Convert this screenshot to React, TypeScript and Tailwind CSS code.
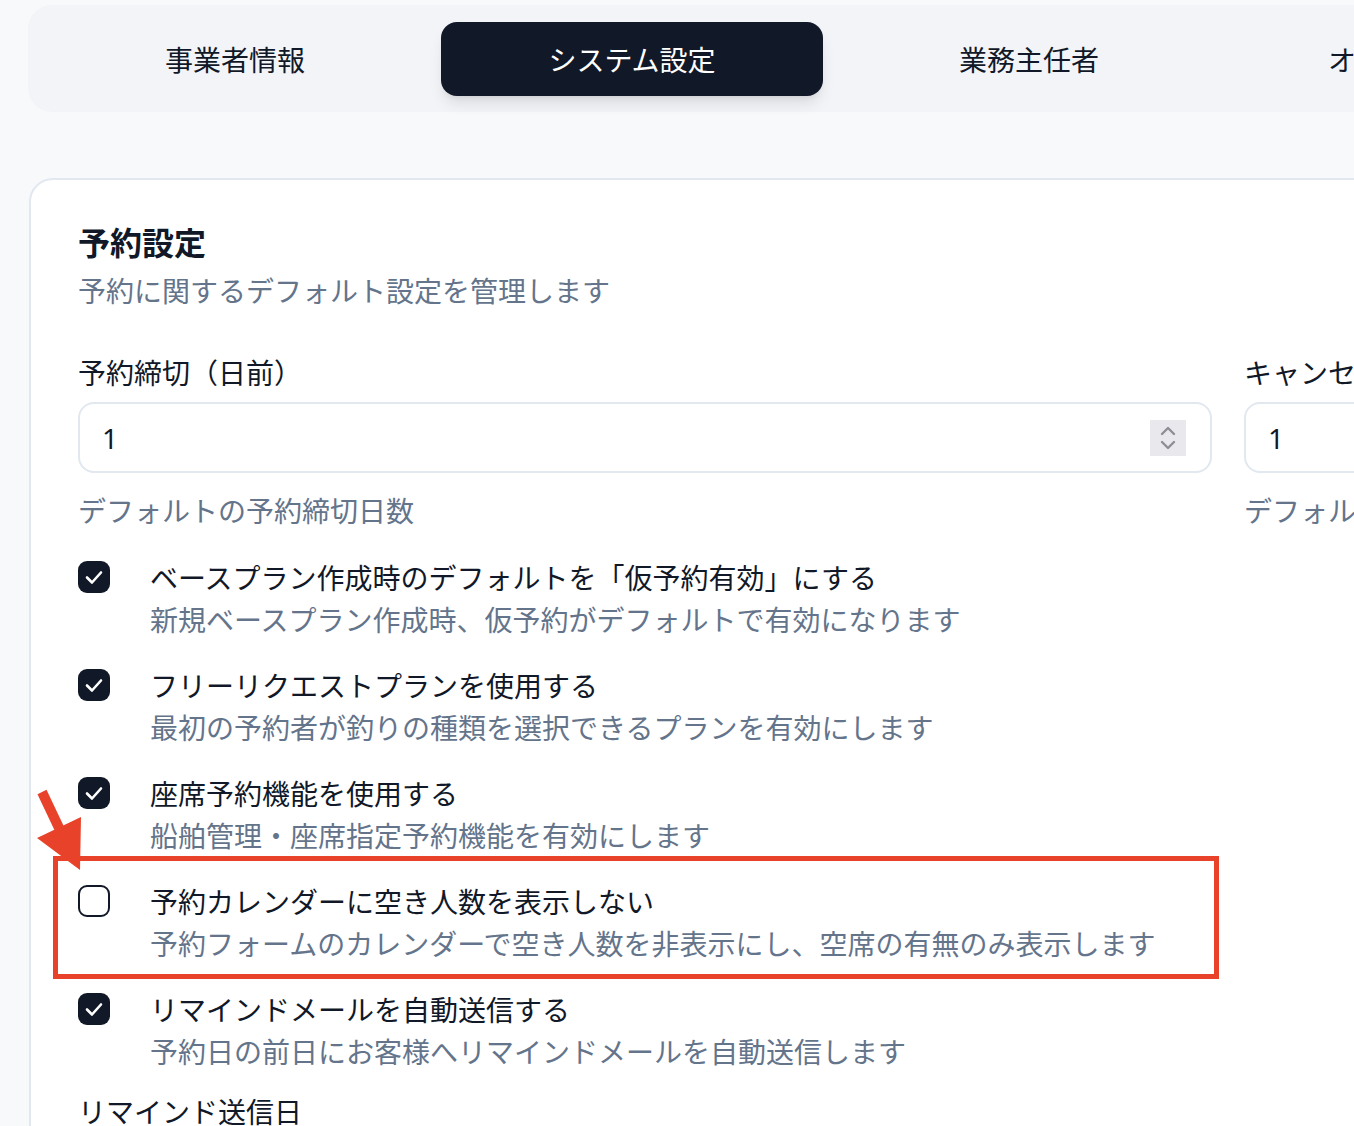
import React from 'react';

const tabs = ['事業者情報', 'システム設定', '業務主任者', 'オプション設定'];

const options = [
  {
    label: 'ベースプラン作成時のデフォルトを「仮予約有効」にする',
    desc: '新規ベースプラン作成時、仮予約がデフォルトで有効になります',
    checked: true,
  },
  {
    label: 'フリーリクエストプランを使用する',
    desc: '最初の予約者が釣りの種類を選択できるプランを有効にします',
    checked: true,
  },
  {
    label: '座席予約機能を使用する',
    desc: '船舶管理・座席指定予約機能を有効にします',
    checked: true,
  },
  {
    label: '予約カレンダーに空き人数を表示しない',
    desc: '予約フォームのカレンダーで空き人数を非表示にし、空席の有無のみ表示します',
    checked: false,
  },
  {
    label: 'リマインドメールを自動送信する',
    desc: '予約日の前日にお客様へリマインドメールを自動送信します',
    checked: true,
  },
];

const Spinner: React.FC = () => (
  <div className="flex h-9 w-9 items-center justify-center bg-[#e8e8ed]">
    <svg width="20" height="28" viewBox="0 0 20 28" fill="none" stroke="#8e8e96" strokeWidth="2.4" strokeLinecap="round" strokeLinejoin="round">
      <polyline points="4,10 10,4 16,10" />
      <polyline points="4,18 10,24 16,18" />
    </svg>
  </div>
);

const NumberField: React.FC<{ label: string; help: string; spinner?: boolean }> = ({ label, help, spinner }) => (
  <div className="flex flex-col">
    <div className="text-[28px] leading-[40px] text-[#111827]">{label}</div>
    <div className="mt-[10px] flex h-[71px] items-center justify-between rounded-2xl border-2 border-[#e2e8f0] bg-white pl-[22px] pr-[24px]">
      <span className="font-['Noto_Sans',sans-serif] text-[28px] text-[#111827]">1</span>
      {spinner && <Spinner />}
    </div>
    <div className="mt-[17px] text-[28px] leading-[40px] text-[#64748b]">{help}</div>
  </div>
);

const Checkbox: React.FC<{ checked: boolean }> = ({ checked }) =>
  checked ? (
    <div className="mt-[5px] flex h-8 w-8 shrink-0 items-center justify-center rounded-[9px] bg-[#111827]">
      <svg width="24" height="24" viewBox="0 0 24 24" fill="none" stroke="white" strokeWidth="2.6" strokeLinecap="round" strokeLinejoin="round">
        <polyline points="5,12.5 10,17.5 19,7.5" />
      </svg>
    </div>
  ) : (
    <div className="mt-[5px] h-8 w-8 shrink-0 rounded-[9px] border-2 border-[#111827] bg-white" />
  );

const App: React.FC = () => {
  return (
    <div className="relative h-[1126px] w-[1354px] overflow-hidden bg-[#f8f9fb] font-['Noto_Sans_CJK_JP','Noto_Sans',sans-serif]">
      {/* Tabs */}
      <div className="pl-[28px] pt-[5px]">
        <div className="flex w-[1700px] gap-[15px] rounded-l-[24px] bg-[#f3f4f8] pb-[16px] pl-4 pt-[17px]">
          {tabs.map((t, i) => (
            <div
              key={t}
              className={
                i === 1
                  ? 'flex h-[74px] w-[382px] shrink-0 items-center justify-center rounded-2xl bg-[#111827] text-[28px] text-white shadow-lg'
                  : 'flex h-[74px] w-[382px] shrink-0 items-center justify-center rounded-2xl text-[28px] text-[#111827]'
              }
            >
              {t}
            </div>
          ))}
        </div>
      </div>

      {/* Card */}
      <div className="ml-[29px] mt-[66px] w-[2400px] rounded-tl-[24px] border-2 border-[#e2e8f0] bg-white pb-20 pl-[47px] pt-[37px]">
        <h2 className="text-[32px] font-bold leading-[48px] text-[#111827]">予約設定</h2>
        <p className="mt-[5px] text-[28px] leading-[40px] text-[#64748b]">予約に関するデフォルト設定を管理します</p>

        <div className="mt-[42px] grid w-[2299px] grid-cols-[1134px_1134px] gap-x-[32px]">
          <NumberField label="予約締切（日前）" help="デフォルトの予約締切日数" spinner />
          <NumberField label="キャンセル期限（日前）" help="デフォルトのキャンセル期限日数" />
        </div>

        <div className="mt-[26px] flex flex-col gap-6">
          {options.map(o => (
            <div key={o.label} className="flex gap-[40px]">
              <Checkbox checked={o.checked} />
              <div className="flex flex-col text-[28px] leading-[42px]">
                <span className="text-[#111827]">{o.label}</span>
                <span className="text-[#64748b]">{o.desc}</span>
              </div>
            </div>
          ))}
        </div>

        <div className="mt-[19px] text-[28px] leading-[40px] text-[#111827]">リマインド送信日</div>
      </div>

      {/* Annotation */}
      <div className="pointer-events-none absolute left-[53px] top-[856px] h-[123px] w-[1166px] border-[5px] border-[#e8432a]" />
      <svg className="pointer-events-none absolute left-[30px] top-[785px]" width="60" height="90" viewBox="0 0 60 90">
        <line x1="12" y1="7" x2="30" y2="45" stroke="#e8432a" strokeWidth="10" />
        <polygon points="7,53 51,32 50,85" fill="#e8432a" />
      </svg>
    </div>
  );
};

export default App;
